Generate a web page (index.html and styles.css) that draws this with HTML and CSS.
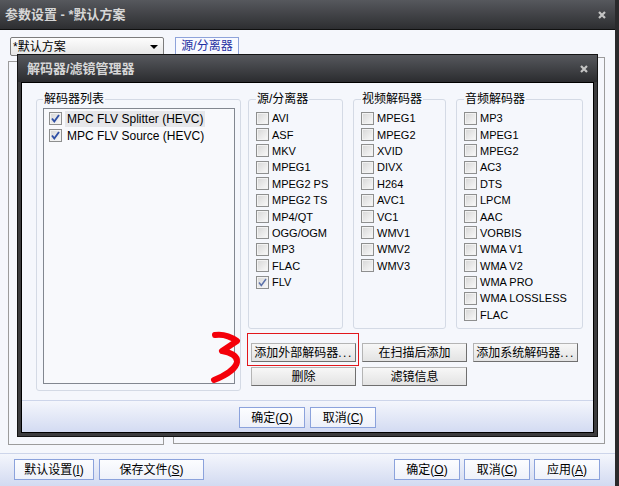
FILE: index.html
```html
<!DOCTYPE html>
<html lang="zh-CN">
<head>
  <meta charset="UTF-8" />
  <title>参数设置</title>
  <link rel="stylesheet" href="styles.css">
</head>
<body>

<div class="window">
  <div class="titlebar">
    <span class="title">参数设置 - *默认方案</span>
    <svg class="close" viewBox="0 0 8 8"><path d="M1 1L7 7M7 1L1 7"/></svg>
  </div>

  <div class="win-main">
    <div class="col-left">
      <div class="combo"><span>*默认方案</span><span class="arrow"></span></div>
      <div class="pane pane-left"></div>
    </div>
    <div class="col-right">
      <div class="tab">源/分离器</div>
      <div class="pane pane-right"></div>
    </div>
  </div>

  <div class="win-foot">
    <div class="btn-row">
      <button class="btn blue" style="width:80px">默认设置(<u>I</u>)</button>
      <button class="btn blue" style="width:105px">保存文件(<u>S</u>)</button>
    </div>
    <div class="btn-row tight">
      <button class="btn blue">确定(<u>O</u>)</button>
      <button class="btn blue">取消(<u>C</u>)</button>
      <button class="btn blue">应用(<u>A</u>)</button>
    </div>
  </div>

  <!-- modal on top of the settings window -->
  <div class="dialog">
    <div class="dlg-title">
      <span>解码器/滤镜管理器</span>
      <svg class="close" viewBox="0 0 8 8"><path d="M1 1L7 7M7 1L1 7"/></svg>
    </div>
    <div class="dlg-body">
      <div class="dlg-main">
        <fieldset class="group list-group">
          <legend>解码器列表</legend>
          <div class="listbox">
            <div class="list-row">
              <span class="cb"><svg viewBox="0 0 11 11"><path d="M2 5.5L4.3 8.5L9 2"/></svg></span>
              <span class="list-text sel">MPC FLV Splitter (HEVC)</span>
            </div>
            <div class="list-row">
              <span class="cb"><svg viewBox="0 0 11 11"><path d="M2 5.5L4.3 8.5L9 2"/></svg></span>
              <span class="list-text">MPC FLV Source (HEVC)</span>
            </div>
          </div>
        </fieldset>

        <div class="right-area">
          <div class="groups">
            <fieldset class="group g-src">
              <legend>源/分离器</legend>
              <div class="opt"><span class="cb"></span>AVI</div>
              <div class="opt"><span class="cb"></span>ASF</div>
              <div class="opt"><span class="cb"></span>MKV</div>
              <div class="opt"><span class="cb"></span>MPEG1</div>
              <div class="opt"><span class="cb"></span>MPEG2 PS</div>
              <div class="opt"><span class="cb"></span>MPEG2 TS</div>
              <div class="opt"><span class="cb"></span>MP4/QT</div>
              <div class="opt"><span class="cb"></span>OGG/OGM</div>
              <div class="opt"><span class="cb"></span>MP3</div>
              <div class="opt"><span class="cb"></span>FLAC</div>
              <div class="opt"><span class="cb soft"><svg viewBox="0 0 11 11"><path d="M2 5.5L4.3 8.5L9 2"/></svg></span>FLV</div>
            </fieldset>
            <fieldset class="group g-video">
              <legend>视频解码器</legend>
              <div class="opt"><span class="cb"></span>MPEG1</div>
              <div class="opt"><span class="cb"></span>MPEG2</div>
              <div class="opt"><span class="cb"></span>XVID</div>
              <div class="opt"><span class="cb"></span>DIVX</div>
              <div class="opt"><span class="cb"></span>H264</div>
              <div class="opt"><span class="cb"></span>AVC1</div>
              <div class="opt"><span class="cb"></span>VC1</div>
              <div class="opt"><span class="cb"></span>WMV1</div>
              <div class="opt"><span class="cb"></span>WMV2</div>
              <div class="opt"><span class="cb"></span>WMV3</div>
            </fieldset>
            <fieldset class="group g-audio">
              <legend>音频解码器</legend>
              <div class="opt"><span class="cb"></span>MP3</div>
              <div class="opt"><span class="cb"></span>MPEG1</div>
              <div class="opt"><span class="cb"></span>MPEG2</div>
              <div class="opt"><span class="cb"></span>AC3</div>
              <div class="opt"><span class="cb"></span>DTS</div>
              <div class="opt"><span class="cb"></span>LPCM</div>
              <div class="opt"><span class="cb"></span>AAC</div>
              <div class="opt"><span class="cb"></span>VORBIS</div>
              <div class="opt"><span class="cb"></span>WMA V1</div>
              <div class="opt"><span class="cb"></span>WMA V2</div>
              <div class="opt"><span class="cb"></span>WMA PRO</div>
              <div class="opt"><span class="cb"></span>WMA LOSSLESS</div>
              <div class="opt"><span class="cb"></span>FLAC</div>
            </fieldset>
          </div>

          <div class="actions">
            <div class="cell">
              <button class="btn gray">添加外部解码器<span class="dots">...</span></button>
              <span class="mark"></span>
            </div>
            <div class="cell"><button class="btn gray">在扫描后添加</button></div>
            <div class="cell"><button class="btn gray">添加系统解码器<span class="dots">...</span></button></div>
            <div class="cell"><button class="btn gray">删除</button></div>
            <div class="cell"><button class="btn gray">滤镜信息</button></div>
          </div>
        </div>
      </div>

      <div class="dlg-foot">
        <button class="btn blue">确定(<u>O</u>)</button>
        <button class="btn blue">取消(<u>C</u>)</button>
      </div>
    </div>
  </div>

  <!-- hand-drawn annotation -->
  <svg class="scribble" viewBox="0 0 36 56">
    <path d="M7 5C14 4 22 6 29 11L14 21C22 22 30 26 29 32C28 39 16 46 6 50"/>
  </svg>
</div>

</body>
</html>
```

FILE: styles.css
```css
* {
  box-sizing: border-box;
}

body {
  margin: 0;
  background: #2a2a2c;
  font-family: "Liberation Sans", "Noto Sans CJK SC", sans-serif;
  font-size: 12px;
  color: #000;
}

.window {
  position: relative;
  width: 615px;
  height: 486px;
  display: flex;
  flex-direction: column;
  background: #f5f7fc;
}

.titlebar {
  height: 30px;
  flex: none;
  display: flex;
  align-items: center;
  justify-content: space-between;
  padding: 0 9px 0 5px;
  background: linear-gradient(#56585d, #2d2e31);
  border-bottom: 1px solid #101010;
}

.title,
.dlg-title span {
  color: #d6d6d6;
  font-weight: bold;
  font-size: 13px;
  line-height: 16px;
}

.close {
  width: 8px;
  height: 8px;
}

.close path {
  stroke: #c4c4c4;
  stroke-width: 2.2;
  fill: none;
}

/* settings window */
.win-main {
  flex: 1;
  display: flex;
  padding: 7px 0 0 8px;
}

.col-left {
  width: 156px;
}

.combo {
  margin-left: 2px;
  height: 19px;
  display: flex;
  align-items: center;
  justify-content: space-between;
  padding: 0 5px 0 2px;
  border: 1px solid #7c7c7c;
  border-radius: 2px;
  background: linear-gradient(#fdfdfd, #e6e6e6);
  line-height: 16px;
}

.arrow {
  width: 0;
  height: 0;
  border-left: 4px solid transparent;
  border-right: 4px solid transparent;
  border-top: 4px solid #000;
}

.pane {
  border: 1px solid #9c9c9c;
}

.pane-left {
  margin-top: 5px;
  height: 384px;
}

.col-right {
  width: 432px;
  margin-left: 9px;
}

.tab {
  margin-left: 2px;
  width: 64px;
  height: 19px;
  border: 1px solid #8ea3da;
  background: #f9faff;
  color: #1f30a2;
  text-align: center;
  line-height: 17px;
}

.pane-right {
  margin-top: 1px;
  height: 387px;
}

.win-foot {
  height: 33px;
  flex: none;
  display: flex;
  justify-content: space-between;
  padding: 5px 15px 0 14px;
  border-top: 1px solid #cdd5ea;
  background: linear-gradient(#f4f6fc, #d2daf1);
}

.btn-row {
  display: flex;
  gap: 5px;
}

.btn-row.tight {
  gap: 4px;
}

.btn {
  height: 21px;
  width: 66px;
  padding: 0;
  font-family: inherit;
  font-size: 12px;
  line-height: 16px;
  color: #000;
  cursor: pointer;
}

.btn.blue {
  border: 1px solid #8ba2dc;
  background: linear-gradient(#fcfdff, #eef1fa);
}

.btn.gray {
  width: 105px;
  height: 19px;
  border: 1px solid;
  border-color: #b4b4b4 #6f6f6f #6f6f6f #b4b4b4;
  background: linear-gradient(#f7f7f7, #e3e3e3);
}

.dots {
  letter-spacing: 1.5px;
}

/* decoder manager dialog */
.dialog {
  position: absolute;
  left: 17px;
  top: 54px;
  width: 581px;
  height: 383px;
  display: flex;
  flex-direction: column;
  padding: 0 3px 3px;
  border: 1px solid #141414;
  background: linear-gradient(#56585d 0, #2b2c2f 27px, #3c3c3e 27px);
}

.dlg-title {
  height: 27px;
  flex: none;
  display: flex;
  align-items: center;
  justify-content: space-between;
  padding: 0 6px 0 6px;
}

.dlg-body {
  flex: 1;
  display: flex;
  flex-direction: column;
  border: 1px solid #000;
  background: #f5f7fc;
}

.dlg-main {
  flex: 1;
  display: flex;
  gap: 7px;
  padding: 8px 0 0 14px;
}

.group {
  margin: 0;
  padding: 3px 5px 0 7px;
  border: 1px solid #d4dae5;
  border-radius: 3px;
  min-width: 0;
}

.group legend {
  padding: 0 1px;
  font-size: 12px;
  line-height: 16px;
}

.list-group {
  width: 205px;
  height: 300px;
  padding-top: 1px;
  padding-left: 6px;
}

.listbox {
  height: 276px;
  border: 1px solid #828790;
  background: #f8f9fc;
  padding: 1px 0 0 5px;
}

.list-row {
  height: 17px;
  display: flex;
  align-items: center;
  gap: 3px;
}

.list-text {
  height: 16px;
  padding: 0 2px;
  line-height: 16px;
}

.list-text.sel {
  background: #e6e7ea;
}

.cb {
  width: 13px;
  height: 13px;
  flex: none;
  display: flex;
  align-items: center;
  justify-content: center;
  border: 1px solid #8e8f8f;
  background: linear-gradient(135deg, #d6d6d6, #fafafa);
  box-shadow: inset 0 0 0 1px #f2f2f2;
}

.cb svg {
  width: 11px;
  height: 11px;
}

.cb path {
  fill: none;
  stroke: #2f4fa5;
  stroke-width: 1.9;
}

.cb.soft path {
  stroke: #5d72aa;
  stroke-width: 1.5;
}

.right-area {
  width: 335px;
}

.groups {
  display: flex;
  gap: 10px;
}

.groups .group {
  height: 238px;
}

.g-src {
  width: 95px;
}

.g-video {
  width: 93px;
}

.g-audio {
  width: 127px;
}

.opt {
  height: 16.4px;
  display: flex;
  align-items: center;
  gap: 3px;
  font-family: "Liberation Sans Narrow", "Liberation Sans", sans-serif;
  font-size: 11px;
  white-space: nowrap;
}

.actions {
  display: grid;
  grid-template-columns: repeat(3, 105px);
  column-gap: 6px;
  row-gap: 5px;
  margin: 14px 0 0 3px;
}

.cell {
  position: relative;
  display: flex;
}

.mark {
  position: absolute;
  left: -4px;
  top: -10px;
  right: -3px;
  bottom: -4px;
  border: 1px solid #e2161b;
  pointer-events: none;
}

.dlg-foot {
  height: 32px;
  flex: none;
  display: flex;
  justify-content: center;
  gap: 5px;
  padding-top: 6px;
  border-top: 1px solid #cdd5ea;
  background: linear-gradient(#f4f6fc, #d3dbf2);
}

.scribble {
  position: absolute;
  left: 208px;
  top: 330px;
  width: 36px;
  height: 56px;
}

.scribble path {
  fill: none;
  stroke: #f4000a;
  stroke-width: 6;
  stroke-linecap: round;
  stroke-linejoin: round;
}
```
